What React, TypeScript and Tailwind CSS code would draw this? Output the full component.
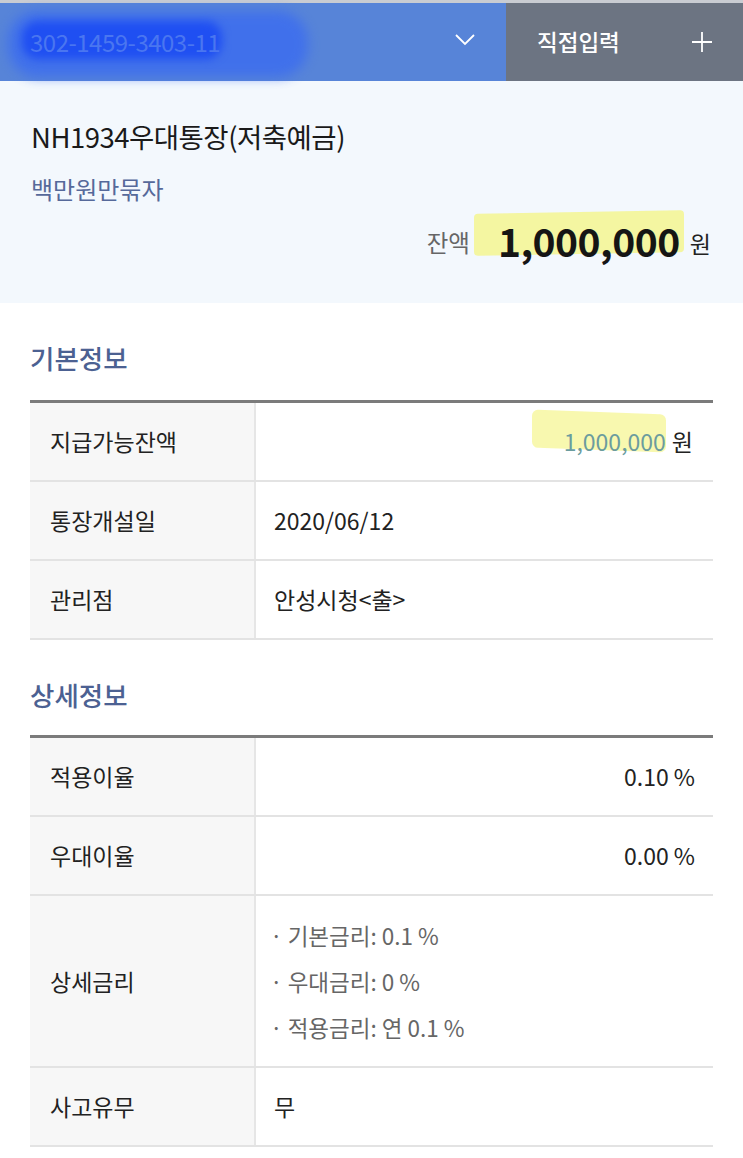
import React from "react";

const font = { fontFamily: '"Noto Sans CJK KR", "Noto Sans", sans-serif' };

function Row({ label, children, tall }: { label: string; children: React.ReactNode; tall?: boolean }) {
  return (
    <div className={`flex border-b-2 border-[#e3e3e3] ${tall ? "h-[172px]" : "h-[79px]"}`}>
      <div className="w-[226px] shrink-0 bg-[#f7f7f7] border-r-2 border-[#e6e6e6] flex items-center pl-[20px] text-[23px] text-[#222]">
        {label}
      </div>
      <div className="flex-1 flex items-center px-[18px] text-[23px] text-[#222]">{children}</div>
    </div>
  );
}

export default function App() {
  return (
    <div className="w-[743px] min-h-[1158px] bg-white" style={font}>
      {/* top bar */}
      <div className="flex h-[81px] border-t-[3px] border-[#c9ccd2]">
        <div className="relative w-[506px] bg-[#5784d8] flex items-center pl-[30px]">
          <div className="absolute left-[8px] top-[8px] w-[300px] h-[66px] rounded-[30px] bg-[#3b6cf0] blur-[6px] opacity-80"></div>
          <div className="absolute left-[22px] top-[18px] w-[200px] h-[38px] rounded-[16px] bg-[#1f4ff2] blur-[4px]"></div>
          <span className="relative text-[24px] text-[#4a76f0] tracking-[-0.5px]">302-1459-3403-11</span>
          <svg className="absolute left-[454px] top-[30px]" width="22" height="14" viewBox="0 0 22 14" fill="none">
            <path d="M2 2 L11 11 L20 2" stroke="white" strokeWidth="1.8" />
          </svg>
        </div>
        <div className="flex-1 bg-[#6c7482] flex items-center justify-between pl-[31px] pr-[30px]">
          <span className="text-[22.5px] font-medium text-white">직접입력</span>
          <svg width="22" height="22" viewBox="0 0 22 22" fill="none">
            <path d="M11 1 V21 M1 11 H21" stroke="white" strokeWidth="1.8" />
          </svg>
        </div>
      </div>

      {/* account summary */}
      <div className="bg-[#f3f8fd] h-[222px] px-[31px] pt-[34px]">
        <div className="text-[27.5px] text-[#1a1a1a] leading-[42px] tracking-[-0.5px]">NH1934우대통장(저축예금)</div>
        <div className="text-[24px] text-[#56699a] leading-[36px] mt-[14px]">백만원만묶자</div>
        <div className="flex items-end justify-end mt-[9px] pr-[1px]">
          <span className="text-[23.5px] text-[#666] mb-[4px] mr-[28px]">잔액</span>
          <span className="relative">
            <span className="absolute left-[-24px] right-[-4px] top-[-4px] h-[42px] bg-[#f4f58a] opacity-80 rounded-[4px] -skew-y-1"></span>
            <span className="relative text-[39px] font-bold text-[#151515] leading-[48px] tracking-[-0.5px]">1,000,000</span>
          </span>
          <span className="text-[23px] text-[#222] mb-[4px] ml-[10px]">원</span>
        </div>
      </div>

      {/* 기본정보 */}
      <div className="px-[30px] pb-[10px]">
        <div className="text-[26.5px] font-medium text-[#4c6192] pt-[37px] pb-[24px] leading-[36px]">기본정보</div>
        <div className="border-t-[3px] border-[#7b7b7b]">
          <Row label="지급가능잔액">
            <div className="ml-auto flex items-center gap-[6px] pr-[2px]">
              <span className="relative">
                <span className="absolute left-[-32px] right-[0px] top-[-12px] h-[38px] bg-[#f7f7a6] opacity-90 rounded-[6px] skew-y-2"></span>
                <span className="relative text-[#6b9c9e]">1,000,000</span>
              </span>
              <span>원</span>
            </div>
          </Row>
          <Row label="통장개설일">2020/06/12</Row>
          <Row label="관리점">안성시청&lt;출&gt;</Row>
        </div>

        {/* 상세정보 */}
        <div className="text-[26.5px] font-medium text-[#4c6192] pt-[37px] pb-[22px] leading-[36px]">상세정보</div>
        <div className="border-t-[3px] border-[#7b7b7b]">
          <Row label="적용이율">
            <span className="ml-auto">0.10 %</span>
          </Row>
          <Row label="우대이율">
            <span className="ml-auto">0.00 %</span>
          </Row>
          <Row label="상세금리" tall>
            <div className="flex flex-col gap-[14px] text-[22.5px] leading-[32px] text-[#666] -ml-[4px]">
              <span>· 기본금리: 0.1 %</span>
              <span>· 우대금리: 0 %</span>
              <span>· 적용금리: 연 0.1 %</span>
            </div>
          </Row>
          <Row label="사고유무">무</Row>
        </div>
      </div>
    </div>
  );
}
